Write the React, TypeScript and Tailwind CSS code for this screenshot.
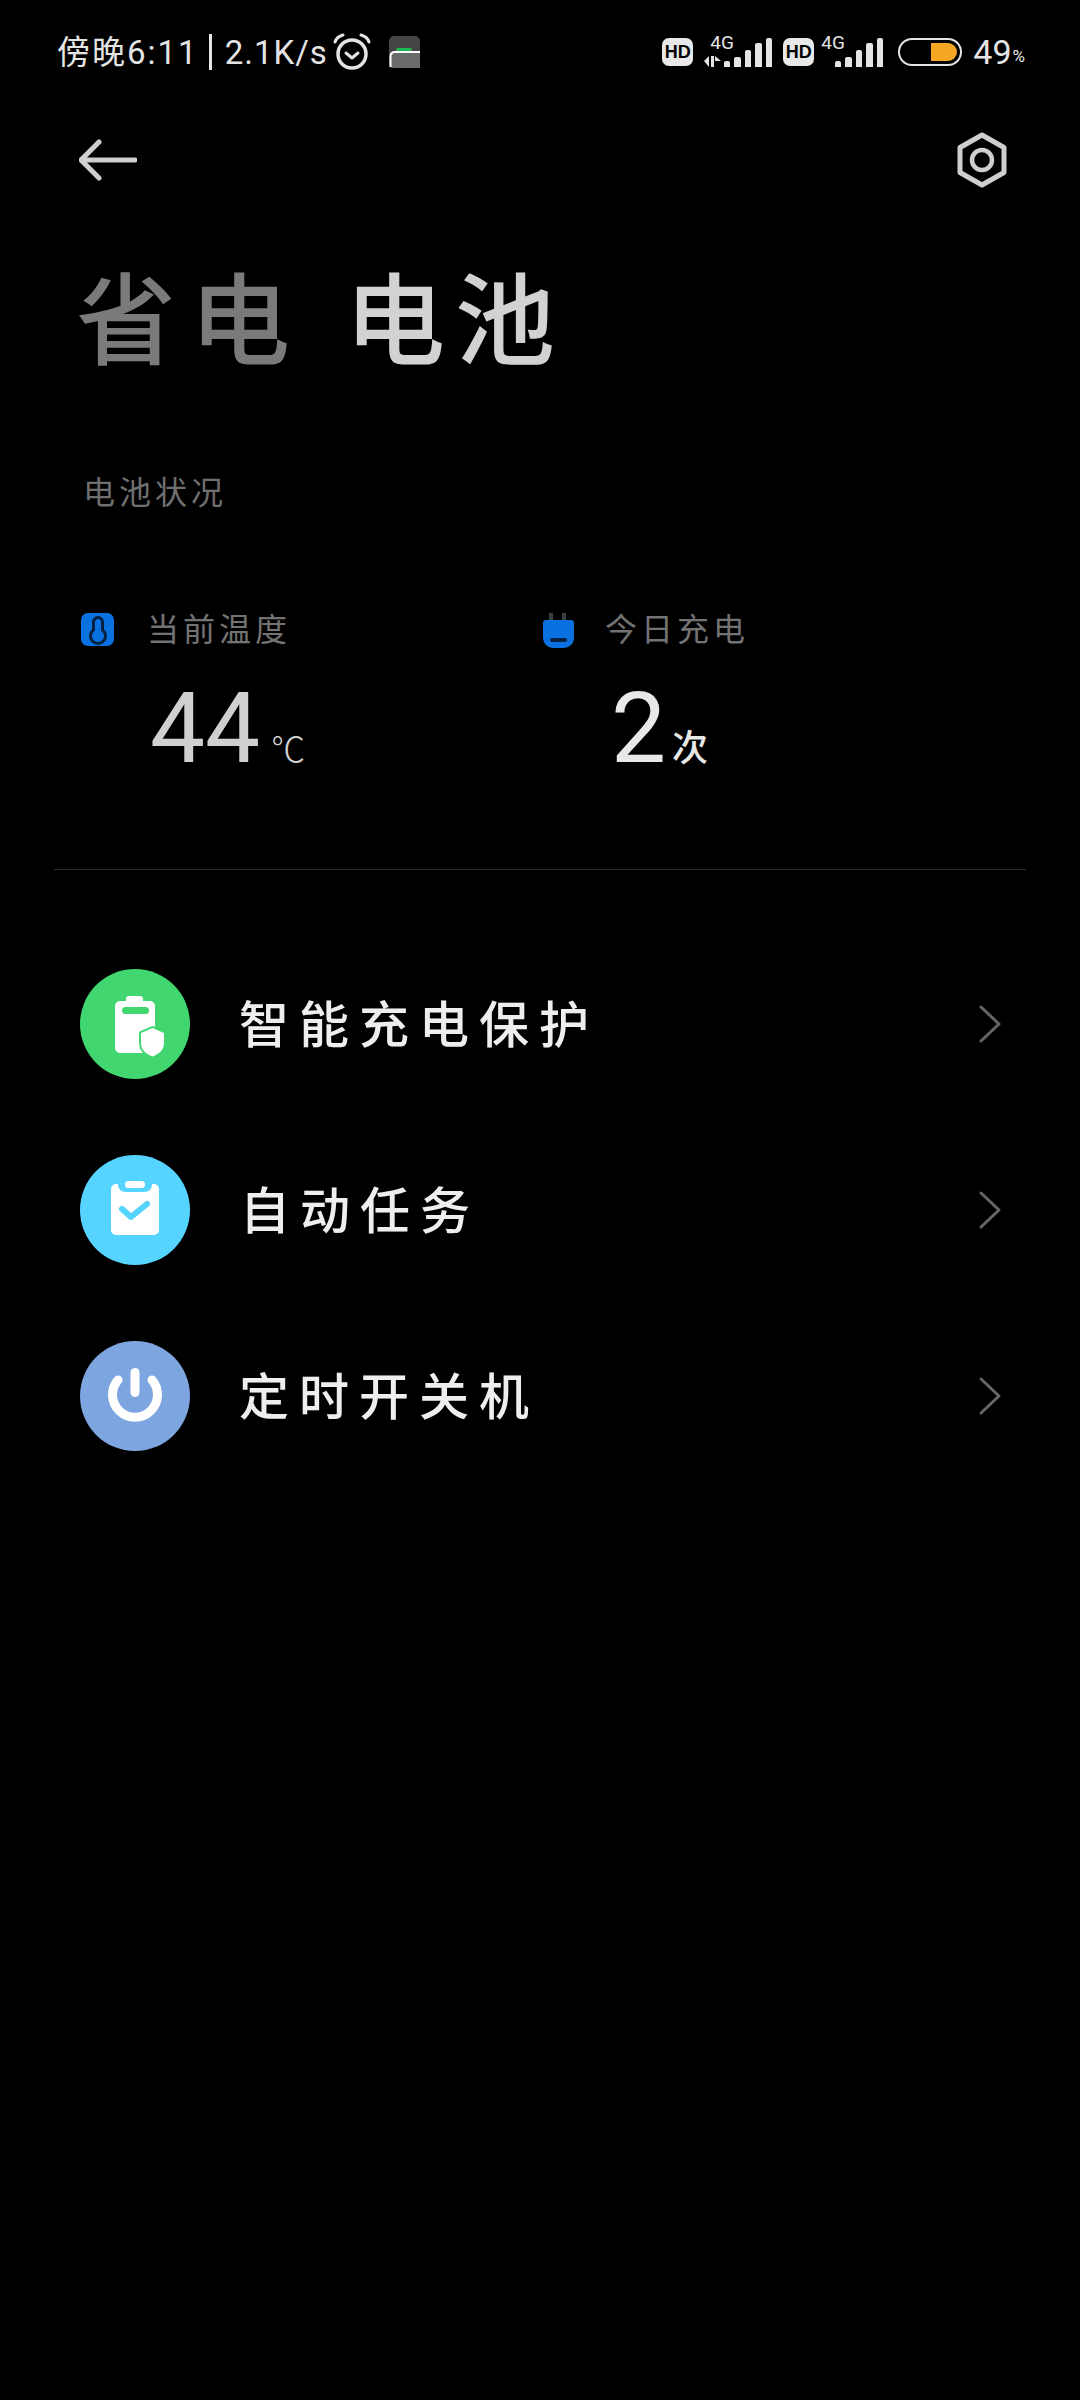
import type { ReactNode } from "react";

const CJK = "font-['Roboto','Noto_Sans_CJK_SC',sans-serif]";

function Alarm() {
  return (
    <svg width="40" height="38" viewBox="0 0 40 38" fill="none" stroke="#e4e4e4" strokeLinecap="round">
      <circle cx="19" cy="21" r="14" strokeWidth="3.5" />
      <path d="M13 20l6 5 6-5" strokeWidth="3" strokeLinejoin="round" />
      <path d="M2 9c1-3 4-6 8-7M36 9c-1-3-4-6-8-7" strokeWidth="3" />
    </svg>
  );
}

function WalletThumb() {
  return (
    <svg width="31" height="32" viewBox="0 0 31 32">
      <rect width="31" height="32" rx="5" fill="#444" />
      <path d="M1 16h30v16H4a3 3 0 01-3-3z" fill="#6b6b6b" />
      <rect x="7.5" y="12" width="15" height="4" fill="#1db954" />
      <path d="M1.5 31V20a4 4 0 014-4H31" fill="none" stroke="#fff" strokeWidth="2" />
    </svg>
  );
}

function Hd() {
  return (
    <span className="flex h-[28px] w-[31px] items-center justify-center rounded-[7px] bg-[#e8e8e8] font-['Liberation_Sans',sans-serif] text-[18px] leading-none font-bold text-black">
      HD
    </span>
  );
}

function Signal({ arrows }: { arrows?: boolean }) {
  const bars = [6, 10, 17, 24, 29];
  return (
    <div className="relative h-[29px] w-[49px]">
      <span className="absolute top-[-5px] left-[-13px] font-['Roboto',sans-serif] text-[19px] leading-[20px] text-[#e4e4e4]">4G</span>
      {arrows && (
        <svg className="absolute top-[18px] left-[-19px]" width="17" height="11" viewBox="0 0 17 11" fill="#e4e4e4">
          <path d="M0 5l5-5v11zM7 0h3v11H7zM11 0l6 5h-6z" />
        </svg>
      )}
      <div className="absolute right-0 bottom-0 flex items-end gap-[4px]">
        {bars.map((h, i) => (
          <span key={i} className="w-[6.5px] rounded-t-[2px] bg-[#e4e4e4]" style={{ height: h }} />
        ))}
      </div>
    </div>
  );
}

function Battery() {
  return (
    <div className="flex h-[28px] w-[64px] items-center justify-end rounded-full border-2 border-[#e4e4e4] p-[3px]">
      <span className="h-[18px] w-[26px] rounded-r-full bg-[#f5a623]" />
    </div>
  );
}

function StatusBar() {
  return (
    <div className={`flex h-[72px] items-center justify-between pt-[32px] pr-[55px] pl-[57px] ${CJK} text-[#e4e4e4]`}>
      <div className="flex items-center">
        <span className="text-[33px] leading-none tracking-[2px]">傍晚6:11</span>
        <span className="mr-[13px] ml-[10px] h-[36px] w-[3px] bg-[#e4e4e4]" />
        <span className="text-[33px] leading-none tracking-[1px]">2.1K/s</span>
        <span className="ml-[5px]"><Alarm /></span>
        <span className="ml-[16px]"><WalletThumb /></span>
      </div>
      <div className="flex items-center">
        <Hd />
        <span className="ml-[30px]"><Signal arrows /></span>
        <span className="ml-[11px]"><Hd /></span>
        <span className="ml-[20px]"><Signal /></span>
        <span className="ml-[15px]"><Battery /></span>
        <span className="ml-[11px] text-[34px] leading-none">49</span>
        <span className="mt-[8px] ml-[1px] text-[17px] leading-none">%</span>
      </div>
    </div>
  );
}

function Header() {
  return (
    <div className="mt-[60px] flex items-center justify-between pr-[73px] pl-[79px]">
      <svg width="58" height="42" viewBox="0 0 58 42" fill="none" stroke="#cfcfcf" strokeWidth="5" strokeLinecap="round" strokeLinejoin="round">
        <path d="M20 3L2 21l18 18M2 21h54" />
      </svg>
      <svg width="50" height="56" viewBox="0 0 50 56" fill="none" stroke="#cfcfcf" strokeLinejoin="round">
        <path d="M25 3l22 12.5v25L25 53 3 40.5v-25z" strokeWidth="5" />
        <circle cx="25" cy="28" r="10" strokeWidth="4.5" />
      </svg>
    </div>
  );
}

function Thermo() {
  return (
    <svg width="34" height="35" viewBox="0 0 34 35">
      <rect x="1" width="33" height="33" rx="7" fill="#0a71e0" />
      <path d="M13.5 17V9a4.5 4.5 0 019 0v8a7.5 7.5 0 11-9 0z" fill="#0a71e0" stroke="#06213f" strokeWidth="3" />
    </svg>
  );
}

function Plug() {
  return (
    <svg width="31" height="35" viewBox="0 0 31 35">
      <rect x="6" width="4" height="8" fill="#3a3f46" />
      <rect x="19" width="4" height="8" fill="#3a3f46" />
      <path d="M3 7h25a3 3 0 013 3v15a10 10 0 01-10 10H10A10 10 0 010 25V10a3 3 0 013-3z" fill="#0a71e0" />
      <rect x="7" y="25" width="17" height="4" rx="2" fill="#06213f" />
    </svg>
  );
}

function Stat({ icon, iconClass, numberClass, label, value, unit, unitClass, className }: { icon: ReactNode; iconClass: string; numberClass: string; label: string; value: string; unit: string; unitClass: string; className: string }) {
  return (
    <div className={className}>
      <div className="flex h-[36px] items-center">
        <span className={`flex ${iconClass}`}>{icon}</span>
        <span className="text-[32px] leading-none tracking-[4px] text-[#737373]">{label}</span>
      </div>
      <div className={`mt-[41px] flex items-end ${numberClass}`}>
        <span className="font-['Roboto',sans-serif] text-[98px] leading-[80px]">{value}</span>
        <span className={unitClass}>{unit}</span>
      </div>
    </div>
  );
}

function MenuRow({ color, label, icon, textClass }: { color: string; label: string; icon: ReactNode; textClass?: string }) {
  return (
    <div className="flex h-[186px] items-center pr-[78px] pl-[80px]">
      <span className={`flex h-[110px] w-[110px] items-center justify-center rounded-full ${color}`}>{icon}</span>
      <span className={`mt-[3px] ml-[49px] flex-1 text-[50px] leading-none font-medium tracking-[10px] text-[#eeeeee] ${textClass ?? ""}`}>{label}</span>
      <svg width="24" height="40" viewBox="0 0 24 40" fill="none" stroke="#666666" strokeWidth="3" strokeLinecap="round" strokeLinejoin="round">
        <path d="M3 3l18 17L3 37" />
      </svg>
    </div>
  );
}

export default function App() {
  return (
    <div className={`h-[2400px] w-[1080px] bg-black ${CJK}`}>
      <StatusBar />
      <Header />

      <h1 className="mt-[83px] flex pl-[76px] text-[100px] leading-[104px] font-medium">
        <span className="tracking-[14px] text-[#7a7a7a]">省电</span>
        <span className="ml-[41px] tracking-[10px] text-[#d2d2d2]">电池</span>
      </h1>

      <p className="mt-[98px] pl-[83px] text-[32px] leading-[40px] tracking-[4px] text-[#6f6f6f]">电池状况</p>

      <div className="mt-[99px] flex pl-[80px]">
        <Stat
          className="w-[463px] text-[#d0d0d0]"
          iconClass="w-[67px]"
          numberClass="pl-[70px]"
          icon={<Thermo />}
          label="当前温度"
          value="44"
          unit="℃"
          unitClass="mb-[2px] ml-[11px] text-[34px] leading-none font-light text-[#d0d0d0]"
        />
        <Stat
          className="text-[#e8e8e8]"
          iconClass="w-[62px]"
          numberClass="pl-[68px]"
          icon={<Plug />}
          label="今日充电"
          value="2"
          unit="次"
          unitClass="mb-[2px] ml-[6px] text-[36px] leading-none font-medium text-[#e8e8e8]"
        />
      </div>

      <div className="mx-[54px] mt-[100px] h-[1px] bg-[#2b2b2b]" />

      <div className="mt-[61px]">
        <MenuRow
          color="bg-[#41d66f]"
          label="智能充电保护"
          icon={
            <svg width="68" height="68" viewBox="-14 -6 68 68">
              <path d="M11 5V3a3 3 0 013-3h11a3 3 0 013 3v2h7a5 5 0 015 5v42a5 5 0 01-5 5H5a5 5 0 01-5-5V10a5 5 0 015-5z" fill="#fff" />
              <rect x="7" y="11" width="27" height="7" rx="3.5" fill="#41d66f" />
              <path d="M37.5 32l11.5 5v10c0 7-5 11-11.5 13.5-6.5-2.5-11.5-6.5-11.5-13.5V37z" fill="#fff" stroke="#41d66f" strokeWidth="4" paintOrder="stroke" strokeLinejoin="round" />
            </svg>
          }
        />
        <MenuRow
          color="bg-[#55d4ff]"
          label="自动任务"
          textClass="pl-[1px]"
          icon={
            <svg width="48" height="58" viewBox="0 0 48 58">
              <rect x="14" width="20" height="7" rx="3.5" fill="#fff" />
              <path d="M5 3h2c0 5 3 8 8 8h18c5 0 8-3 8-8h2a5 5 0 015 5v41a5 5 0 01-5 5H5a5 5 0 01-5-5V8a5 5 0 015-5z" fill="#fff" />
              <path d="M11 28l9 8 16-13" fill="none" stroke="#55d4ff" strokeWidth="6" strokeLinecap="round" strokeLinejoin="round" />
            </svg>
          }
        />
        <MenuRow
          color="bg-[#7da5e0]"
          label="定时开关机"
          icon={
            <svg width="60" height="60" viewBox="0 0 60 60" fill="none" stroke="#fff" strokeWidth="9" strokeLinecap="round">
              <path d="M30 6.5V26.5" />
              <path d="M13 14a22.5 22.5 0 1034 0" />
            </svg>
          }
        />
      </div>
    </div>
  );
}
